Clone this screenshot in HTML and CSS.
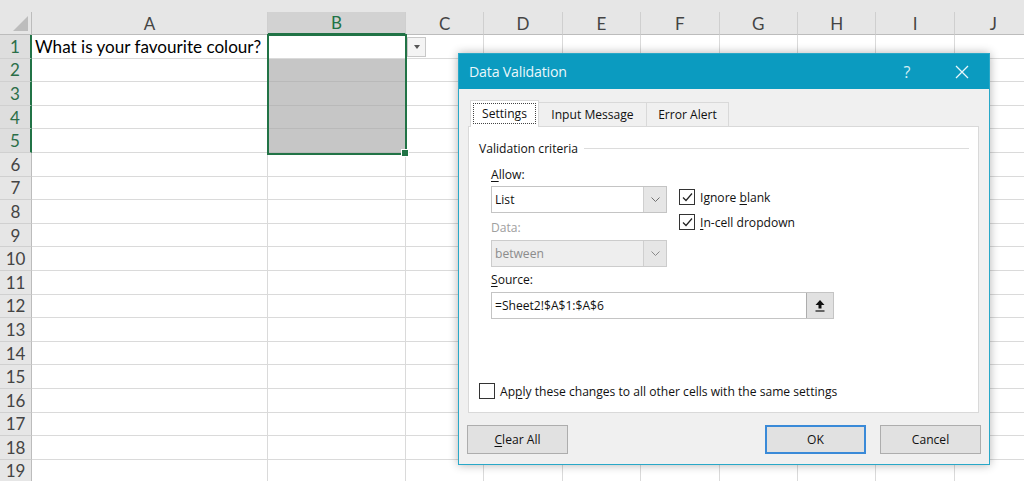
FILE: index.html
```html
<!DOCTYPE html>
<html>
<head>
<meta charset="utf-8">
<title>Data Validation</title>
<link rel="stylesheet" href="styles.css">
</head>
<body>
<div class="top"></div>
<div class="sheet">
  <div class="row hdr"><div class="corner"><span class="tri"></span></div><div>A</div><div class="csel">B</div><div>C</div><div>D</div><div>E</div><div>F</div><div>G</div><div>H</div><div>I</div><div>J</div></div>
  <div class="row"><div class="rh rsel">1</div><div class="txt">What is your favourite colour?</div><div class="act"></div><div></div><div></div><div></div><div></div><div></div><div></div><div></div><div></div></div>
  <div class="row"><div class="rh rsel">2</div><div></div><div class="fill"></div><div></div><div></div><div></div><div></div><div></div><div></div><div></div><div></div></div>
  <div class="row"><div class="rh rsel">3</div><div></div><div class="fill"></div><div></div><div></div><div></div><div></div><div></div><div></div><div></div><div></div></div>
  <div class="row"><div class="rh rsel">4</div><div></div><div class="fill"></div><div></div><div></div><div></div><div></div><div></div><div></div><div></div><div></div></div>
  <div class="row"><div class="rh rsel">5</div><div></div><div class="fill"></div><div></div><div></div><div></div><div></div><div></div><div></div><div></div><div></div></div>
  <div class="row"><div class="rh">6</div><div></div><div></div><div></div><div></div><div></div><div></div><div></div><div></div><div></div><div></div></div>
  <div class="row"><div class="rh">7</div><div></div><div></div><div></div><div></div><div></div><div></div><div></div><div></div><div></div><div></div></div>
  <div class="row"><div class="rh">8</div><div></div><div></div><div></div><div></div><div></div><div></div><div></div><div></div><div></div><div></div></div>
  <div class="row"><div class="rh">9</div><div></div><div></div><div></div><div></div><div></div><div></div><div></div><div></div><div></div><div></div></div>
  <div class="row"><div class="rh">10</div><div></div><div></div><div></div><div></div><div></div><div></div><div></div><div></div><div></div><div></div></div>
  <div class="row"><div class="rh">11</div><div></div><div></div><div></div><div></div><div></div><div></div><div></div><div></div><div></div><div></div></div>
  <div class="row"><div class="rh">12</div><div></div><div></div><div></div><div></div><div></div><div></div><div></div><div></div><div></div><div></div></div>
  <div class="row"><div class="rh">13</div><div></div><div></div><div></div><div></div><div></div><div></div><div></div><div></div><div></div><div></div></div>
  <div class="row"><div class="rh">14</div><div></div><div></div><div></div><div></div><div></div><div></div><div></div><div></div><div></div><div></div></div>
  <div class="row"><div class="rh">15</div><div></div><div></div><div></div><div></div><div></div><div></div><div></div><div></div><div></div><div></div></div>
  <div class="row"><div class="rh">16</div><div></div><div></div><div></div><div></div><div></div><div></div><div></div><div></div><div></div><div></div></div>
  <div class="row"><div class="rh">17</div><div></div><div></div><div></div><div></div><div></div><div></div><div></div><div></div><div></div><div></div></div>
  <div class="row"><div class="rh">18</div><div></div><div></div><div></div><div></div><div></div><div></div><div></div><div></div><div></div><div></div></div>
  <div class="row"><div class="rh">19</div><div></div><div></div><div></div><div></div><div></div><div></div><div></div><div></div><div></div><div></div></div>
</div>

<div class="selection"><span class="handle"></span></div>
<div class="cell-dd"><span class="dd-tri"></span></div>

<div class="dlg">
  <div class="titlebar">
    <span class="ttl">Data Validation</span>
    <span class="help">?</span>
    <span class="close"><svg width="14" height="14" viewBox="0 0 14 14"><path d="M1 1 L13 13 M13 1 L1 13" stroke="#e9f7fb" stroke-width="1.3" fill="none"/></svg></span>
  </div>
  <div class="dbody">
    <div class="tabs">
      <div class="tab active"><span class="focus">Settings</span></div>
      <div class="tab t2">Input Message</div>
      <div class="tab t3">Error Alert</div>
    </div>
    <div class="panel">
      <div class="group"><span>Validation criteria</span><span class="gline"></span></div>
      <div class="crit">
        <div class="leftcol">
          <div class="lbl l-allow"><u>A</u>llow:</div>
          <div class="combo"><span class="cval">List</span><span class="cbtn"><svg width="9" height="5" viewBox="0 0 9 5"><path d="M0.5 0.5 L4.5 4.5 L8.5 0.5" stroke="#707070" fill="none" stroke-width="1"/></svg></span></div>
          <div class="lbl l-data dis">Data:</div>
          <div class="combo disabled"><span class="cval">between</span><span class="cbtn"><svg width="9" height="5" viewBox="0 0 9 5"><path d="M0.5 0.5 L4.5 4.5 L8.5 0.5" stroke="#8a8a8a" fill="none" stroke-width="1"/></svg></span></div>
        </div>
        <div class="checks">
          <div class="chk"><span class="box"><svg width="13" height="13" viewBox="0 0 13 13"><path d="M2 6.5 L5 9.5 L11 2.5" stroke="#222" stroke-width="1.2" fill="none"/></svg></span><span>Ignore <u>b</u>lank</span></div>
          <div class="chk c2"><span class="box"><svg width="13" height="13" viewBox="0 0 13 13"><path d="M2 6.5 L5 9.5 L11 2.5" stroke="#222" stroke-width="1.2" fill="none"/></svg></span><span><u>I</u>n-cell dropdown</span></div>
        </div>
      </div>
      <div class="src">
        <div class="lbl l-src"><u>S</u>ource:</div>
        <div class="srcbox"><span class="cval">=Sheet2!$A$1:$A$6</span><span class="sbtn"><svg width="10" height="13" viewBox="0 0 10 13"><path d="M5 1 L9.5 6 L6.5 6 L6.5 9.5 L3.5 9.5 L3.5 6 L0.5 6 Z" fill="#111"/><path d="M0.5 12 L9.5 12" stroke="#111" stroke-width="1.2"/></svg></span></div>
      </div>
      <div class="chk apply"><span class="box"></span><span>Ap<u>p</u>ly these changes to all other cells with the same settings</span></div>
    </div>
    <div class="footer">
      <div class="btn"><u>C</u>lear All</div>
      <div class="spacer"></div>
      <div class="btn ok">OK</div>
      <div class="btn cancel">Cancel</div>
    </div>
  </div>
</div>
</body>
</html>
```

FILE: styles.css
```css
html, body { margin: 0; padding: 0; }
body {
  width: 1024px; height: 481px; overflow: hidden; position: relative;
  background: #fff; font-family: Lato, "Open Sans", sans-serif;
}
.top { height: 12px; background: #e6e6e6; }
.sheet { display: flex; flex-direction: column; }
.row {
  display: grid;
  grid-template-columns: 32px 236px 138px repeat(8, 78.4px);
  height: 23.6px;
  flex: none;
}
.row > div {
  box-sizing: border-box;
  border-right: 1px solid #dadada;
  border-bottom: 1px solid #dadada;
  white-space: nowrap;
}
.row.hdr { height: 23px; background: #e6e6e6; }
.row.hdr > div {
  display: flex; align-items: center; justify-content: center;
  color: #444; font-size: 17px;
  border-right: 1px solid #cfcfcf; border-bottom: 1px solid #bcbcbc;
}
.row.hdr > .corner { position: relative; border-right-color: #bcbcbc; }
.tri {
  position: absolute; right: 3px; bottom: 3px; width: 0; height: 0;
  border-left: 15px solid transparent; border-bottom: 15px solid #bdbdbd;
}
.row.hdr > .csel { background: #d2d2d2; color: #217346; border-bottom: 2px solid #217346; }
.rh {
  background: #e6e6e6; color: #444; font-size: 17px;
  display: flex; align-items: center; justify-content: center;
  border-right-color: #bcbcbc !important;
  border-bottom-color: #d0d0d0 !important;
}
.rh.rsel { background: #dedede; color: #2b6e48; border-right: 2px solid #217346 !important; }
.txt {
  font-size: 17.1px; color: #000; padding-left: 3px;
  display: flex; align-items: center; overflow: visible;
}
.fill { background: #c6c6c6; border-bottom-color: #b9b9b9 !important; }

.selection {
  position: absolute; left: 267px; top: 34px; width: 140px; height: 121px;
  box-sizing: border-box; border: 2px solid #217346;
}
.handle {
  position: absolute; right: -4px; bottom: -4px; width: 6px; height: 6px;
  background: #217346; border: 1px solid #fff;
}
.cell-dd {
  position: absolute; left: 407px; top: 37px; width: 19px; height: 20px;
  box-sizing: border-box; border: 1px solid #c8c8c8; background: #f4f4f4;
  display: flex; align-items: center; justify-content: center;
}
.dd-tri { width: 0; height: 0; border-left: 3.5px solid transparent; border-right: 3.5px solid transparent; border-top: 4px solid #555; }

/* dialog */
.dlg {
  position: absolute; left: 458px; top: 53px; width: 532px; height: 412px;
  box-sizing: border-box; border: 1px solid #28a8c8; background: #f0f0f0;
  box-shadow: 0 0 9px rgba(0,0,0,0.3);
  display: flex; flex-direction: column;
  font-family: "Open Sans", sans-serif; font-size: 12.1px; color: #111;
}
.titlebar {
  height: 35px; flex: none; background: #0b9bc0; color: #eaf7fb;
  display: flex; align-items: center; padding-left: 10px;
}
.ttl { font-size: 14.2px; flex: 1; letter-spacing: -0.2px; }
.help { font-size: 16px; width: 20px; text-align: center; margin-right: 38px; color: #d4eef5; }
.close { width: 14px; height: 14px; margin-right: 20px; display: flex; }
.dbody {
  flex: 1; display: flex; flex-direction: column;
  padding: 11px 10px 10px 9px;
}
.tabs { display: flex; height: 26px; padding-left: 2px; position: relative; z-index: 1; }
.tab {
  box-sizing: border-box; height: 24px; margin-top: 2px;
  border: 1px solid #d9d9d9; border-bottom: none; background: #f0f0f0;
  display: flex; align-items: center; justify-content: center;
}
.tab.active { height: 27px; margin-top: 0; width: 69px; background: #fff; }
.tab.t2 { width: 108px; border-left: none; }
.tab.t3 { width: 82px; border-left: none; }
.focus {
  box-sizing: border-box; width: 63px; height: 21px; margin-top: -1px;
  border: 1px dotted #444;
  display: flex; align-items: center; justify-content: center;
}
.panel {
  height: 287px; flex: none; box-sizing: border-box; background: #fff;
  border: 1px solid #d9d9d9; padding: 13px 9px 0 10px;
  display: flex; flex-direction: column;
}
.group { display: flex; align-items: center; height: 16px; }
.gline { flex: 1; height: 1px; background: #dcdcdc; margin-left: 6px; }
.crit { display: flex; padding-left: 12px; margin-top: 11px; }
.leftcol { width: 176px; display: flex; flex-direction: column; }
.lbl { height: 16px; line-height: 16px; }
.dis { color: #a0a0a0; }
.l-data { margin-top: 7px; }
.combo {
  box-sizing: border-box; height: 27px; margin-top: 3px;
  border: 1px solid #c4c4c4; background: #fff;
  display: flex; align-items: stretch;
}
.combo.disabled { margin-top: 4px; background: #eeeeee; color: #8c8c8c; border-color: #cccccc; }
.cval { flex: 1; display: flex; align-items: center; padding-left: 3px; }
.cbtn {
  width: 22px; background: #e6e6e6; border-left: 1px solid #cfcfcf;
  display: flex; align-items: center; justify-content: center;
}
.checks { margin-left: 12px; padding-top: 22px; display: flex; flex-direction: column; }
.chk { display: flex; align-items: center; height: 16px; }
.chk.c2 { margin-top: 9px; }
.box {
  box-sizing: border-box; width: 16px; height: 16px; border: 1px solid #333;
  background: #fff; margin-right: 5px;
  display: flex; align-items: center; justify-content: center;
}
.src { padding-left: 12px; margin-top: 5px; display: flex; flex-direction: column; }
.srcbox {
  box-sizing: border-box; width: 343px; height: 27px; margin-top: 4px;
  border: 1px solid #c4c4c4; display: flex; align-items: stretch;
}
.sbtn {
  width: 26px; background: #e1e1e1; border-left: 1px solid #adadad;
  display: flex; align-items: center; justify-content: center;
}
.chk.apply { margin-top: 64px; }
.footer { display: flex; height: 29px; margin: 12px -2px 0 -1px; }
.spacer { flex: 1; }
.btn {
  box-sizing: border-box; width: 101px; height: 29px;
  background: #e1e1e1; border: 1px solid #adadad;
  display: flex; align-items: center; justify-content: center;
}
.btn.ok { border: 2px solid #3a8ad8; }
.btn.cancel { margin-left: 14px; }
u { text-decoration: underline; text-underline-offset: 2px; }
```
